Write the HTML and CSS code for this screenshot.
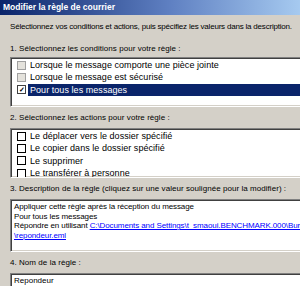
FILE: index.html
```html
<!DOCTYPE html>
<html lang="fr">

<head>
    <meta charset="UTF-8">
    <title>Modifier la règle de courrier</title>
    <link rel="stylesheet" href="styles.css">
</head>

<body>
    <div class="window">
        <div class="titlebar">Modifier la règle de courrier</div>

        <div class="content">
            <p class="intro">Sélectionnez vos conditions et actions, puis spécifiez les valeurs dans la description.</p>

            <p class="label">1. Sélectionnez les conditions pour votre règle :</p>
            <div class="listbox">
                <div class="row"><span class="check disabled"></span><span class="text">Lorsque le message comporte une pièce jointe</span></div>
                <div class="row"><span class="check disabled"></span><span class="text">Lorsque le message est sécurisé</span></div>
                <div class="row selected"><span class="check checked">&#10003;</span><span class="text">Pour tous les messages</span></div>
            </div>

            <p class="label">2. Sélectionnez les actions pour votre règle :</p>
            <div class="listbox">
                <div class="row"><span class="check"></span><span class="text">Le déplacer vers le dossier spécifié</span></div>
                <div class="row"><span class="check"></span><span class="text">Le copier dans le dossier spécifié</span></div>
                <div class="row"><span class="check"></span><span class="text">Le supprimer</span></div>
                <div class="row"><span class="check"></span><span class="text">Le transférer à personne</span></div>
            </div>

            <p class="label">3. Description de la règle (cliquez sur une valeur soulignée pour la modifier) :</p>
            <div class="description">
                <div>Appliquer cette règle après la réception du message</div>
                <div>Pour tous les messages</div>
                <div>Répondre en utilisant <a href="#">C:\Documents and Settings\t_smaoui.BENCHMARK.000\Bureau</a></div>
                <div><a href="#">\repondeur.eml</a></div>
            </div>

            <p class="label">4. Nom de la règle :</p>
            <div class="namebox">Repondeur</div>
        </div>
    </div>
</body>

</html>
```

FILE: styles.css
```css
:root {
    --face-color: #d4d0c8;
    --shadow-color: #808080;
    --dark-shadow: #404040;
    --select-color: #0a246a;
    --title-end: #a6caf0;
    --ui-font: 'Liberation Sans', Arial, sans-serif;
}

html,
body {
    margin: 0;
    padding: 0;
    overflow: hidden;
    background: var(--face-color);
}

body {
    font-family: var(--ui-font);
    font-size: 8px;
    color: #000;
}

.window {
    width: 340px;
}

.titlebar {
    height: 15px;
    line-height: 15px;
    padding-left: 3px;
    background: linear-gradient(to right, var(--select-color) 0, #5f80c2 170px, var(--title-end) 300px);
    color: #fff;
    font-weight: bold;
    font-size: 8.5px;
}

.content {
    padding-left: 10px;
}

.intro,
.label {
    margin: 0;
    line-height: 10px;
    white-space: nowrap;
}

.intro {
    margin-top: 7px;
    letter-spacing: -0.2px;
}

.label {
    margin-top: 6px;
    margin-bottom: 5px;
    letter-spacing: 0.05px;
}

.intro + .label {
    margin-top: 12px;
    margin-bottom: 3px;
}

/* sunken 3d frame */
.listbox,
.description,
.namebox {
    background: #fff;
    border-top: 1px solid var(--shadow-color);
    border-left: 1px solid var(--shadow-color);
    border-bottom: 1px solid #fff;
    border-right: 1px solid #fff;
    box-shadow: inset 1px 1px 0 var(--dark-shadow), inset -1px -1px 0 var(--face-color);
}

.listbox {
    height: 47px;
    padding-top: 1px;
    overflow: hidden;
    box-sizing: content-box;
}

.row {
    display: flex;
    align-items: center;
    height: 12.4px;
    white-space: nowrap;
}

.check {
    flex: none;
    width: 7px;
    height: 7px;
    margin: 0 2px 0 6px;
    border: 1px solid #000;
    background: #fff;
    font-size: 7px;
    line-height: 7px;
    text-align: center;
    font-weight: bold;
}

.check.disabled {
    border-color: #a0a0a0;
    background: #e4e2dc;
}

.check.checked {
    border-color: #404040;
}

.text {
    flex: 1;
    height: 100%;
    line-height: 12.4px;
    padding-left: 2px;
    font-size: 9px;
    letter-spacing: 0.05px;
}

.row.selected .text {
    background: var(--select-color);
    color: #fff;
}

.description {
    height: 49px;
    padding: 2px 0 0 3px;
    line-height: 9.5px;
    letter-spacing: -0.1px;
    white-space: nowrap;
    overflow: hidden;
}

.description a {
    color: #0000ff;
}

.namebox {
    height: 20px;
    padding-left: 3px;
    line-height: 13px;
}
```
